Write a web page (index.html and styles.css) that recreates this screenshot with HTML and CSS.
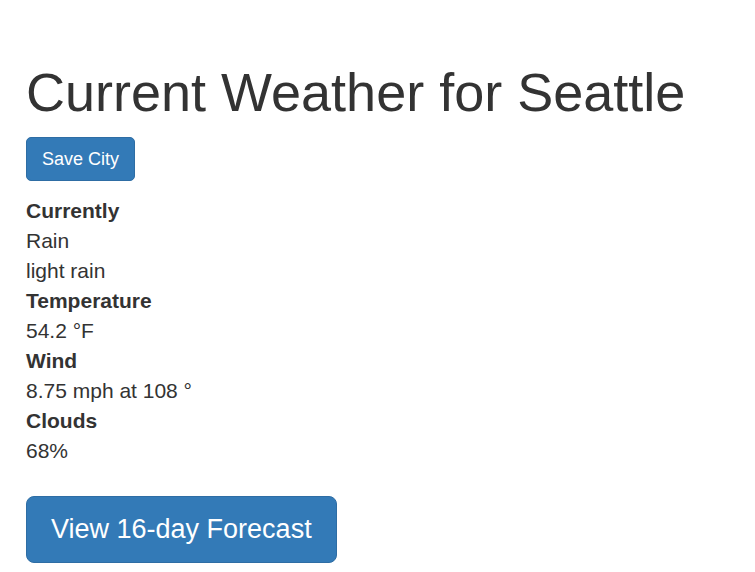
FILE: index.html
```html
<!DOCTYPE html>
<html>
<head>
<meta charset="utf-8">
<link rel="stylesheet" href="styles.css">
</head>
<body>
<div class="page">
  <h1 class="title">Current Weather for Seattle</h1>
  <button class="btn btn-save">Save City</button>
  <dl class="details">
    <dt>Currently</dt>
    <dd>Rain</dd>
    <dd>light rain</dd>
    <dt>Temperature</dt>
    <dd>54.2 °F</dd>
    <dt>Wind</dt>
    <dd>8.75 mph at 108 °</dd>
    <dt>Clouds</dt>
    <dd>68%</dd>
  </dl>
  <button class="btn btn-lg">View 16-day Forecast</button>
</div>
</body>
</html>
```
FILE: styles.css
```css
html, body {
  margin: 0;
  padding: 0;
  background: #fff;
}
body {
  font-family: "Liberation Sans", Arial, sans-serif;
  color: #333;
}
.page {
  padding: 56px 26px 0 26px;
}
.title {
  margin: 0;
  font-size: 54px;
  font-weight: 500;
  line-height: 72px;
  color: #333;
}
.btn {
  display: inline-block;
  font-family: "Liberation Sans", Arial, sans-serif;
  color: #fff;
  background: #337ab7;
  border: 1px solid #2e6da4;
  cursor: pointer;
}
.btn-save {
  margin-top: 9px;
  font-size: 18px;
  line-height: 26px;
  padding: 8px 15px;
  border-radius: 5px;
}
.details {
  margin: 15px 0 30px 0;
  font-size: 21px;
  line-height: 30px;
}
.details dt {
  font-weight: bold;
}
.details dd {
  margin: 0;
}
.btn-lg {
  font-size: 27px;
  line-height: 35px;
  padding: 15px 24px;
  border-radius: 8px;
}
```
